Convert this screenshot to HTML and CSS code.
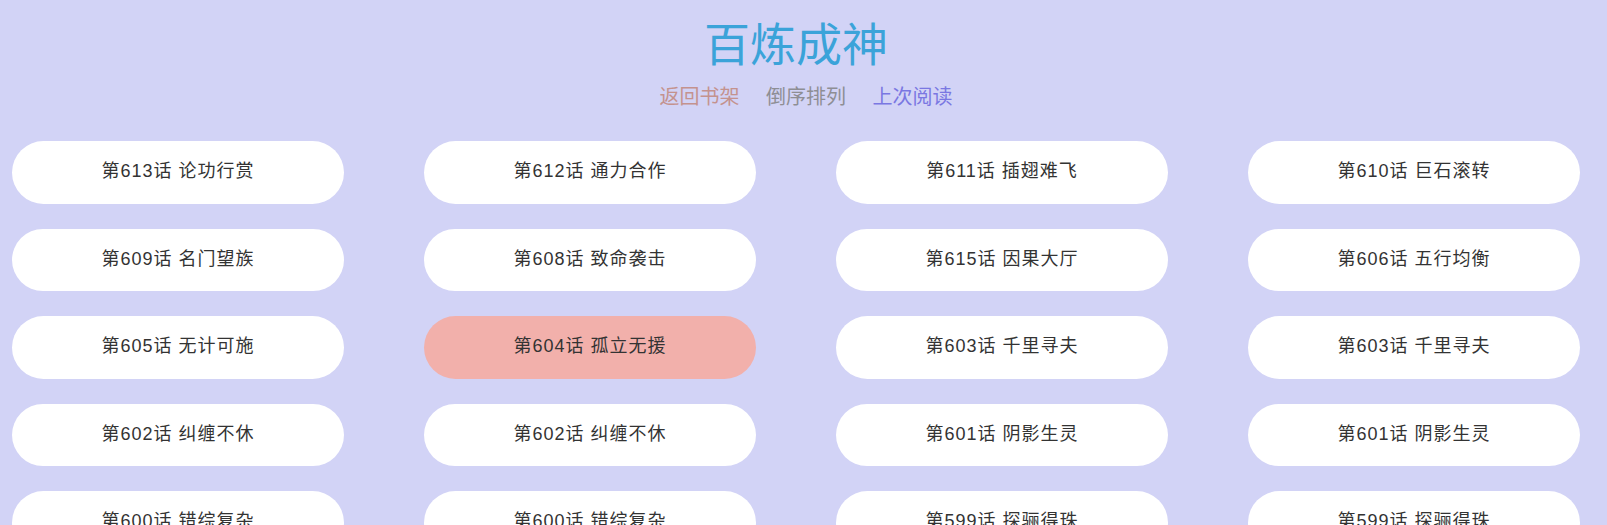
FILE: index.html
```html
<!DOCTYPE html>
<html lang="zh-CN">
<head>
<meta charset="utf-8">
<title>百炼成神</title>
<link rel="stylesheet" href="styles.css">
</head>
<body>
<div class="page">
  <h1 class="title">百炼成神</h1>
  <nav class="links">
    <a class="link link-back" href="#">返回书架</a>
    <a class="link link-sort" href="#">倒序排列</a>
    <a class="link link-last" href="#">上次阅读</a>
  </nav>
  <ul class="chapters">
    <li class="chapter"><span class="num">第613话</span> <span class="name">论功行赏</span></li>
    <li class="chapter"><span class="num">第612话</span> <span class="name">通力合作</span></li>
    <li class="chapter"><span class="num">第611话</span> <span class="name">插翅难飞</span></li>
    <li class="chapter"><span class="num">第610话</span> <span class="name">巨石滚转</span></li>
    <li class="chapter"><span class="num">第609话</span> <span class="name">名门望族</span></li>
    <li class="chapter"><span class="num">第608话</span> <span class="name">致命袭击</span></li>
    <li class="chapter"><span class="num">第615话</span> <span class="name">因果大厅</span></li>
    <li class="chapter"><span class="num">第606话</span> <span class="name">五行均衡</span></li>
    <li class="chapter"><span class="num">第605话</span> <span class="name">无计可施</span></li>
    <li class="chapter chapter-current"><span class="num">第604话</span> <span class="name">孤立无援</span></li>
    <li class="chapter"><span class="num">第603话</span> <span class="name">千里寻夫</span></li>
    <li class="chapter"><span class="num">第603话</span> <span class="name">千里寻夫</span></li>
    <li class="chapter"><span class="num">第602话</span> <span class="name">纠缠不休</span></li>
    <li class="chapter"><span class="num">第602话</span> <span class="name">纠缠不休</span></li>
    <li class="chapter"><span class="num">第601话</span> <span class="name">阴影生灵</span></li>
    <li class="chapter"><span class="num">第601话</span> <span class="name">阴影生灵</span></li>
    <li class="chapter"><span class="num">第600话</span> <span class="name">错综复杂</span></li>
    <li class="chapter"><span class="num">第600话</span> <span class="name">错综复杂</span></li>
    <li class="chapter"><span class="num">第599话</span> <span class="name">探骊得珠</span></li>
    <li class="chapter"><span class="num">第599话</span> <span class="name">探骊得珠</span></li>
  </ul>
</div>
</body>
</html>
```
FILE: styles.css
```css
html, body {
  margin: 0;
  padding: 0;
  background: #d2d3f6;
}

body {
  font-family: "Liberation Sans", "Noto Sans CJK SC", sans-serif;
  height: 525px;
  overflow: hidden;
}

.page {
  width: 1592px;
}

.title {
  margin: 18px 0 0;
  font-family: "Noto Sans CJK SC", sans-serif;
  font-size: 46px;
  line-height: 46px;
  font-weight: normal;
  color: #3ba3d9;
  text-align: center;
}

.links {
  display: flex;
  justify-content: center;
  gap: 26.5px;
  margin-top: 22px;
  padding-left: 20px;
  font-family: "Noto Sans CJK SC", sans-serif;
  font-size: 20px;
  line-height: 20px;
}

.link {
  text-decoration: none;
}

.link-back { color: #c4928e; }
.link-sort { color: #8e8e94; }
.link-last { color: #7a77e2; }

.chapters {
  list-style: none;
  margin: 35px 0 0;
  padding: 0 12px;
  display: grid;
  grid-template-columns: repeat(4, 332px);
  column-gap: 80px;
  row-gap: 25px;
}

.chapter {
  height: 62.5px;
  border-radius: 32px;
  background: #ffffff;
  text-align: center;
  line-height: 60px;
  font-size: 18px;
  letter-spacing: 1px;
  color: #333333;
  white-space: nowrap;
}

.chapter-current {
  background: #f2b0ab;
}
```
